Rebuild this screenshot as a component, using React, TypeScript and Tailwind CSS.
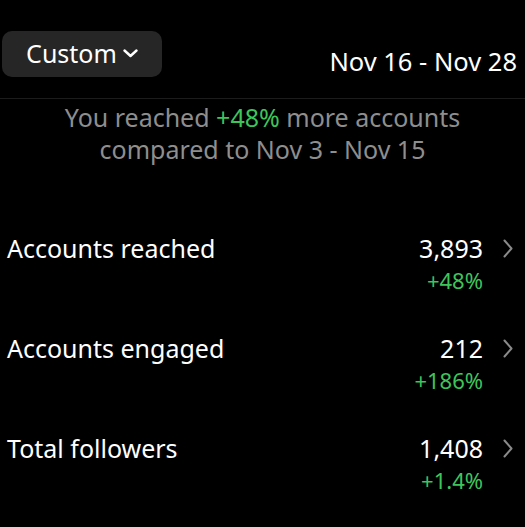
interface Metric {
  label: string
  value: string
  change: string
}

const metrics: Metric[] = [
  { label: 'Accounts reached', value: '3,893', change: '+48%' },
  { label: 'Accounts engaged', value: '212', change: '+186%' },
  { label: 'Total followers', value: '1,408', change: '+1.4%' },
]

export default function App() {
  return (
    <div
      className="h-[527px] w-[525px] overflow-hidden bg-black text-white"
      style={{ fontFamily: '"Noto Sans", "Open Sans", sans-serif' }}
    >
      <div className="flex items-center justify-between pl-[2px] pr-[8px] pt-[28px]">
        <button className="flex h-[46px] w-[160px] items-center justify-center gap-[6px] rounded-[10px] bg-[#262626] text-[25px] text-white">
          Custom
          <svg width="15" height="9" viewBox="0 0 15 9" fill="none" className="mt-[-2px]">
            <polyline points="1.5,1.5 7.5,7 13.5,1.5" stroke="white" strokeWidth="2.4" strokeLinecap="round" strokeLinejoin="round" />
          </svg>
        </button>
        <span className="pt-[14px] text-[25.5px]">Nov 16 - Nov 28</span>
      </div>

      <div className="mt-[18px] h-px bg-[#1c1c1c]" />

      <p className="mt-[2px] text-center text-[25px] leading-[32px] text-[#8e8e8e]">
        You reached <span className="text-[#3ec55a]">+48%</span> more accounts
        <br />
        compared to Nov 3 - Nov 15
      </p>

      <div className="mt-[67px] flex flex-col gap-[36px]">
        {metrics.map((m) => (
          <div key={m.label} className="flex items-start justify-between pl-[7px] pr-[12px]">
            <span className="text-[25px] leading-[32px]">{m.label}</span>
            <div className="flex items-start gap-[20px]">
              <div className="flex flex-col items-end">
                <span className="text-[25px] leading-[32px]">{m.value}</span>
                <span className="text-[22px] leading-[32px] text-[#3ec55a]">{m.change}</span>
              </div>
              <svg width="10" height="19" viewBox="0 0 10 19" fill="none" className="mt-[7px]">
                <polyline points="1.5,1.5 8.5,9.5 1.5,17.5" stroke="#8a8a8a" strokeWidth="2" strokeLinecap="round" strokeLinejoin="round" />
              </svg>
            </div>
          </div>
        ))}
      </div>
    </div>
  )
}
